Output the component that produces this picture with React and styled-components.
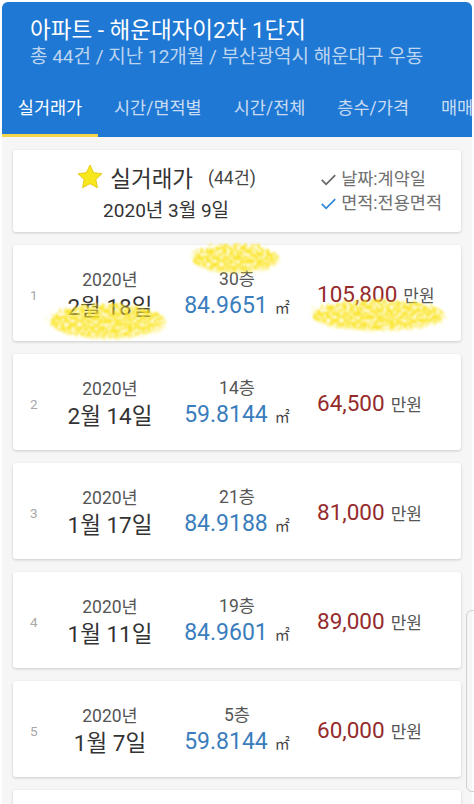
import React from "react"
import styled, { createGlobalStyle } from "styled-components"

const GlobalStyle = createGlobalStyle`
  html, body {
    margin: 0;
    padding: 0;
    background: #ffffff;
  }
  body {
    font-family: Roboto, "Noto Sans CJK KR", sans-serif;
  }
`

const Frame = styled.div`
  position: relative;
  width: 474px;
  height: 804px;
  box-sizing: border-box;
  padding: 2px 2px 0 2px;
  overflow: hidden;
  background: #ffffff;
`

const Screen = styled.div`
  height: 100%;
  border-radius: 6px 6px 0 0;
  overflow: hidden;
  background: #f6f6f6;
  display: flex;
  flex-direction: column;
`

const Header = styled.header`
  background: #1f78d3;
  color: #fff;
`

const TitleBlock = styled.div`
  padding: 14px 0 0 28px;
  height: 72px;
  box-sizing: border-box;
`

const Title = styled.h1`
  margin: 0;
  font-size: 22.5px;
  font-weight: 400;
  line-height: 28px;
`

const Subtitle = styled.div`
  font-size: 19px;
  line-height: 26px;
  color: #bcd5f1;
`

const Tabs = styled.nav`
  display: flex;
  height: 63px;
  white-space: nowrap;
`

const Tab = styled.div`
  position: relative;
  flex: none;
  padding: 2px 16px 0;
  display: flex;
  align-items: center;
  font-size: 17.5px;
  color: ${({ active }) => (active ? "#ffffff" : "#c9dcf3")};
  &:first-child {
    width: 96px;
    box-sizing: border-box;
    justify-content: center;
    padding: 2px 0 0;
  }
  &::after {
    content: "";
    position: absolute;
    left: 0;
    right: 0;
    bottom: 0;
    height: 3px;
    background: ${({ active }) => (active ? "#f4d54a" : "transparent")};
  }
`

const List = styled.div`
  display: flex;
  flex-direction: column;
  gap: 13px;
  padding: 13px 11px 0 11px;
`

const Card = styled.div`
  position: relative;
  flex: none;
  background: #fff;
  border-radius: 3px;
  box-shadow: 0 1px 3px rgba(0, 0, 0, 0.18);
`

const SummaryCard = styled(Card)`
  height: 82px;
  display: flex;
  align-items: center;
`

const SummaryMain = styled.div`
  flex: 1;
  display: flex;
  flex-direction: column;
  align-items: center;
`

const SummaryTitle = styled.div`
  display: flex;
  align-items: center;
  color: #333;
`

const Star = styled.svg`
  width: 28px;
  height: 28px;
  margin-right: 6px;
`

const BigLabel = styled.span`
  font-size: 22.5px;
`

const Count = styled.span`
  font-size: 17.5px;
  color: #444;
  margin-left: 15px;
`

const SummaryDate = styled.div`
  margin-top: 2px;
  font-size: 19px;
  color: #333;
`

const Options = styled.div`
  display: flex;
  flex-direction: column;
  gap: 1px;
  padding-right: 19px;
`

const Option = styled.div`
  display: flex;
  align-items: center;
  gap: 3px;
  font-size: 17.5px;
  color: #707070;
  line-height: 23px;
`

const Check = styled.svg`
  width: 19px;
  height: 19px;
`

const DealCard = styled(Card)`
  height: 96px;
  display: grid;
  grid-template-columns: 36px 122px 132px 1fr;
  align-items: center;
`

const Index = styled.div`
  padding-left: 17px;
  font-size: 13.5px;
  color: #a8a8a8;
  margin-top: 4px;
`

const Stack = styled.div`
  display: flex;
  flex-direction: column;
  align-items: center;
  margin-top: 4px;
`

const SmallLine = styled.div`
  font-size: 17.5px;
  color: #555;
  line-height: 24px;
`

const DateLine = styled.div`
  font-size: 22.5px;
  color: #333;
  line-height: 30px;
`

const AreaLine = styled.div`
  font-size: 23px;
  color: #3a7dbd;
  line-height: 30px;
  white-space: nowrap;
`

const Unit = styled.span`
  font-size: 15px;
  color: #444;
  margin-left: 7px;
`

const Price = styled.div`
  padding-left: 14px;
  margin-top: 2px;
  white-space: nowrap;
`

const PriceValue = styled.span`
  font-size: 22.5px;
  color: #952b2b;
`

const PriceUnit = styled.span`
  font-size: 17px;
  color: #555;
  margin-left: 6px;
`

const Scribble = styled.svg`
  position: absolute;
  pointer-events: none;
  overflow: visible;
`

const EdgePanel = styled.div`
  position: absolute;
  right: -8px;
  top: 610px;
  width: 14px;
  height: 180px;
  border: 1px solid #cfcfcf;
  border-radius: 6px;
`

const deals = [
  { date: "2월 18일", floor: "30층", area: "84.9651", price: "105,800" },
  { date: "2월 14일", floor: "14층", area: "59.8144", price: "64,500" },
  { date: "1월 17일", floor: "21층", area: "84.9188", price: "81,000" },
  { date: "1월 11일", floor: "19층", area: "84.9601", price: "89,000" },
  { date: "1월 7일", floor: "5층", area: "59.8144", price: "60,000" },
]

const tabs = ["실거래가", "시간/면적별", "시간/전체", "층수/가격", "매매"]

// yellow marker scribble drawn over the first row
const Marker = ({ id, style, w, h }) => (
  <Scribble style={style} width={w} height={h} viewBox={`0 0 ${w} ${h}`}>
    <defs>
      <filter id={id} x="-20%" y="-40%" width="140%" height="180%">
        <feTurbulence type="fractalNoise" baseFrequency="0.3" numOctaves="3" seed="5" result="n" />
        <feDisplacementMap in="SourceGraphic" in2="n" scale="14" result="d" />
        <feColorMatrix
          in="n"
          type="matrix"
          values="0 0 0 0 0  0 0 0 0 0  0 0 0 0 0  0 0 0 3 -0.8"
          result="m"
        />
        <feComposite in="d" in2="m" operator="in" result="s" />
        <feGaussianBlur in="s" stdDeviation="1" />
      </filter>
    </defs>
    <ellipse
      cx={w / 2}
      cy={h / 2}
      rx={w / 2 - 5}
      ry={h / 2 - 5}
      fill="#fbe52a"
      filter={`url(#${id})`}
    />
  </Scribble>
)

const App = () => {
  return (
    <Frame>
      <GlobalStyle />
      <Screen>
        <Header>
          <TitleBlock>
            <Title>아파트 - 해운대자이2차 1단지</Title>
            <Subtitle>총 44건 / 지난 12개월 / 부산광역시 해운대구 우동</Subtitle>
          </TitleBlock>
          <Tabs>
            {tabs.map((t, i) => (
              <Tab key={t} active={i === 0}>
                {t}
              </Tab>
            ))}
          </Tabs>
        </Header>
        <List>
          <SummaryCard>
            <SummaryMain>
              <SummaryTitle>
                <Star viewBox="0 0 24 24">
                  <path
                    d="M12 1.8l3.1 6.5 7.1.9-5.2 4.9 1.4 7.1L12 17.7l-6.4 3.5 1.4-7.1-5.2-4.9 7.1-.9z"
                    fill="#f7e81e"
                    stroke="#e6c70e"
                    strokeWidth="0.8"
                    strokeLinejoin="round"
                  />
                </Star>
                <BigLabel>실거래가</BigLabel>
                <Count>(44건)</Count>
              </SummaryTitle>
              <SummaryDate>2020년 3월 9일</SummaryDate>
            </SummaryMain>
            <Options>
              <Option>
                <Check viewBox="0 0 24 24">
                  <path d="M3.5 12.5l5.5 5.5L20.5 6.5" fill="none" stroke="#666" strokeWidth="2.2" />
                </Check>
                날짜:계약일
              </Option>
              <Option>
                <Check viewBox="0 0 24 24">
                  <path d="M3.5 12.5l5.5 5.5L20.5 6.5" fill="none" stroke="#2f87d8" strokeWidth="2.2" />
                </Check>
                면적:전용면적
              </Option>
            </Options>
          </SummaryCard>
          {deals.map((d, i) => (
            <DealCard key={i}>
              <Index>{i + 1}</Index>
              <Stack>
                <SmallLine>2020년</SmallLine>
                <DateLine>{d.date}</DateLine>
              </Stack>
              <Stack>
                <SmallLine>{d.floor}</SmallLine>
                <AreaLine>
                  {d.area}
                  <Unit>㎡</Unit>
                </AreaLine>
              </Stack>
              <Price>
                <PriceValue>{d.price}</PriceValue>
                <PriceUnit>만원</PriceUnit>
              </Price>
              {i === 0 && (
                <>
                  <Marker id="mk1" w={98} h={38} style={{ left: 174, top: -5 }} />
                  <Marker id="mk2" w={126} h={44} style={{ left: 32, top: 55 }} />
                  <Marker id="mk3" w={144} h={40} style={{ left: 294, top: 51 }} />
                </>
              )}
            </DealCard>
          ))}
          <DealCard />
        </List>
      </Screen>
      <EdgePanel />
    </Frame>
  )
}

export default App
